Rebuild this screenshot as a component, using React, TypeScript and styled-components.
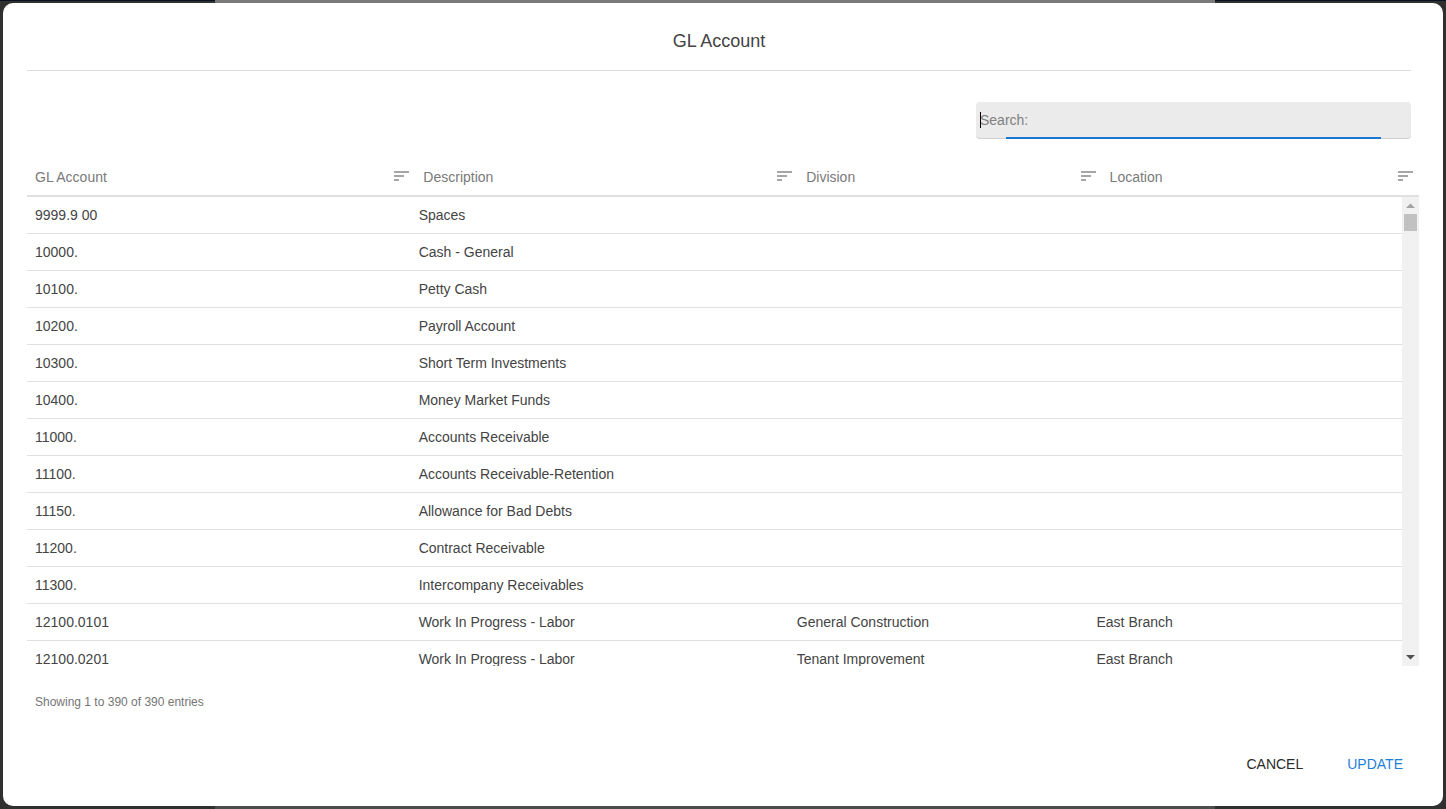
import React from "react";
import styled, { createGlobalStyle } from "styled-components";

const GlobalStyle = createGlobalStyle`
  *, *::before, *::after { box-sizing: border-box; }
  body {
    margin: 0;
    color: #444;
    font: 14px/20px "Liberation Sans", Arial, sans-serif;
  }
`;

const Backdrop = styled.div`
  display: flex;
  min-height: 100vh;
  padding: 3px;
  background:
    linear-gradient(#7a7a7a, #7a7a7a) 215px 0 / calc(100% - 446px) 3px no-repeat,
    linear-gradient(#4d4d4d, #4d4d4d) 215px 100% / calc(100% - 446px) 3px no-repeat,
    linear-gradient(#0b1020, #0b1020) 0 0 / 100% 1px no-repeat,
    #303030;
`;

const Dialog = styled.section`
  display: flex;
  flex: 1;
  flex-direction: column;
  min-width: 0;
  height: calc(100vh - 6px);
  padding: 24px;
  border-radius: 10px;
  background: #fff;
`;

const Header = styled.header`
  margin-right: 8px;
  padding-bottom: 14px;
  border-bottom: 1px solid #dcdcdc;
  text-align: center;
`;

const Title = styled.h1`
  margin: 0;
  font-size: 18px;
  font-weight: 400;
  line-height: 29px;
`;

const Toolbar = styled.div`
  display: flex;
  justify-content: flex-end;
  margin: 31px 8px 20px 0;
`;

const SearchField = styled.label`
  position: relative;
  width: 435px;
  max-width: 100%;

  &::before {
    content: "";
    position: absolute;
    top: 10px;
    left: 4px;
    width: 1px;
    height: 16px;
    background: #000;
  }

  &::after {
    content: "";
    position: absolute;
    right: 30px;
    bottom: 0;
    left: 30px;
    height: 2px;
    background: #1976d2;
  }
`;

const SearchInput = styled.input`
  display: block;
  width: 100%;
  height: 37px;
  padding: 0 4px;
  border: 0;
  border-bottom: 1px solid #cfcfcf;
  border-radius: 4px;
  outline: 0;
  background: #ebebeb;
  color: #444;
  font: inherit;

  &::placeholder { color: #808080; opacity: 1; }
`;

const Table = styled.table`
  width: 100%;
  border-collapse: separate;
  border-spacing: 0;
  table-layout: fixed;
`;

const Col = styled.col<{ $width: string }>`
  width: ${(p) => p.$width};
`;

const HeadCell = styled.th`
  height: 38px;
  padding: 0 6px 0 8px;
  border-bottom: 2px solid #e0e0e0;
  color: #7a7a7a;
  font-weight: 400;
  text-align: left;
`;

const SortButton = styled.button`
  display: flex;
  align-items: center;
  justify-content: space-between;
  width: 100%;
  padding: 0;
  border: 0;
  background: none;
  color: inherit;
  font: inherit;
  cursor: pointer;
`;

const SortIcon = styled.svg`
  width: 15px;
  height: 12px;
  color: #a6a6a6;
`;

const TableArea = styled.div`
  display: flex;
  flex: 1;
  min-height: 0;
`;

const Scroller = styled.div`
  flex: 1;
  min-width: 0;
  overflow-y: auto;
  scrollbar-width: none;
`;

const Cell = styled.td`
  height: 37px;
  padding: 0 8px;
  border-bottom: 1px solid #e0e0e0;
  white-space: nowrap;
`;

const ScrollTrack = styled.div`
  display: flex;
  flex-direction: column;
  width: 17px;
  background: #f1f1f1;
`;

const ScrollArrow = styled.svg<{ $color: string }>`
  flex: none;
  width: 17px;
  height: 17px;
  fill: ${(p) => p.$color};
`;

const ScrollThumb = styled.div`
  height: 17px;
  margin: 0 2px auto;
  background: #c1c1c1;
`;

const Info = styled.p`
  margin: 26px 8px 34px;
  color: #757575;
  font-size: 12px;
`;

const Footer = styled.footer`
  display: flex;
  justify-content: flex-end;
  gap: 28px;
  margin-right: 8px;
`;

const ActionButton = styled.button<{ $primary?: boolean }>`
  height: 36px;
  padding: 0 8px;
  border: 0;
  background: none;
  color: ${(p) => (p.$primary ? "#1e7fd8" : "#2b2b2b")};
  font: inherit;
  text-transform: uppercase;
  cursor: pointer;
`;

const columns = [
  { label: "GL Account", width: "27.9%" },
  { label: "Description", width: "27.5%" },
  { label: "Division", width: "21.8%" },
  { label: "Location", width: "22.8%" },
];

const rows = [
  ["9999.9 00", "Spaces", "", ""],
  ["10000.", "Cash - General", "", ""],
  ["10100.", "Petty Cash", "", ""],
  ["10200.", "Payroll Account", "", ""],
  ["10300.", "Short Term Investments", "", ""],
  ["10400.", "Money Market Funds", "", ""],
  ["11000.", "Accounts Receivable", "", ""],
  ["11100.", "Accounts Receivable-Retention", "", ""],
  ["11150.", "Allowance for Bad Debts", "", ""],
  ["11200.", "Contract Receivable", "", ""],
  ["11300.", "Intercompany Receivables", "", ""],
  ["12100.0101", "Work In Progress - Labor", "General Construction", "East Branch"],
  ["12100.0201", "Work In Progress - Labor", "Tenant Improvement", "East Branch"],
];

const ColumnWidths = () => (
  <colgroup>
    {columns.map((c) => (
      <Col key={c.label} $width={c.width} />
    ))}
  </colgroup>
);

export default function App() {
  return (
    <>
      <GlobalStyle />
      <Backdrop>
        <Dialog role="dialog" aria-labelledby="dialog-title">
          <Header>
            <Title id="dialog-title">GL Account</Title>
          </Header>
          <Toolbar>
            <SearchField>
              <SearchInput type="text" placeholder="Search:" aria-label="Search" />
            </SearchField>
          </Toolbar>
          <Table>
            <ColumnWidths />
            <thead>
              <tr>
                {columns.map((c) => (
                  <HeadCell key={c.label} scope="col">
                    <SortButton type="button">
                      {c.label}
                      <SortIcon viewBox="0 0 15 12" aria-hidden="true">
                        <path
                          d="M0 0h15v2H0zM0 4h10v2H0zM0 8h5v2H0z"
                          fill="currentColor"
                        />
                      </SortIcon>
                    </SortButton>
                  </HeadCell>
                ))}
              </tr>
            </thead>
          </Table>
          <TableArea>
            <Scroller>
              <Table aria-labelledby="dialog-title">
                <ColumnWidths />
                <tbody>
                  {rows.map((row) => (
                    <tr key={row[0]}>
                      {row.map((value, i) => (
                        <Cell key={columns[i].label}>{value}</Cell>
                      ))}
                    </tr>
                  ))}
                </tbody>
              </Table>
            </Scroller>
            <ScrollTrack aria-hidden="true">
              <ScrollArrow viewBox="0 0 17 17" $color="#a3a3a3">
                <path d="M4 11l4.500-4.500 4.500 4.500z" />
              </ScrollArrow>
              <ScrollThumb />
              <ScrollArrow viewBox="0 0 17 17" $color="#505050">
                <path d="M4 6l4.500 4.500 4.500-4.500z" />
              </ScrollArrow>
            </ScrollTrack>
          </TableArea>
          <Info>Showing 1 to 390 of 390 entries</Info>
          <Footer>
            <ActionButton type="button">Cancel</ActionButton>
            <ActionButton type="button" $primary>
              Update
            </ActionButton>
          </Footer>
        </Dialog>
      </Backdrop>
    </>
  );
}
